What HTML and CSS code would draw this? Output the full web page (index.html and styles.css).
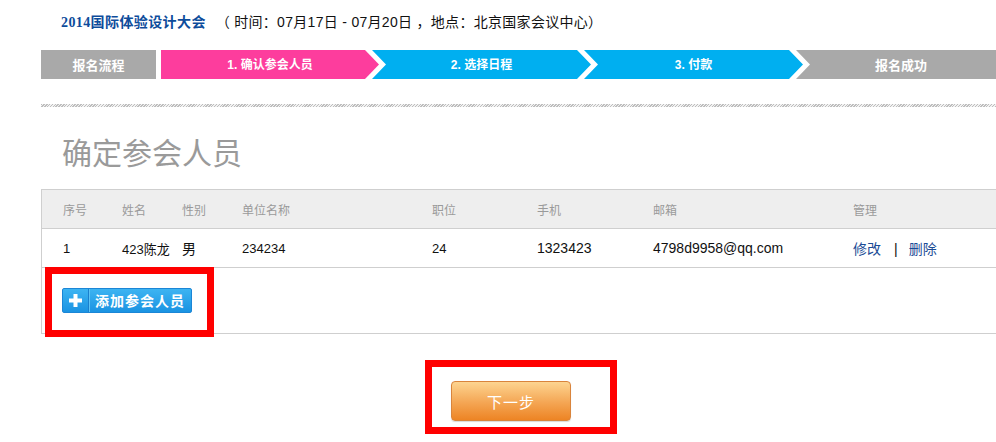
FILE: index.html
```html
<!DOCTYPE html>
<html lang="zh-CN">
<head>
<meta charset="utf-8">
<title>确定参会人员</title>
<link rel="stylesheet" href="styles.css">
</head>
<body>
<div class="page">
  <div class="event-title">
    <span class="event-name">2014国际体验设计大会</span>
    <span class="event-info">（ 时间：07月17日 - 07月20日 ，地点：北京国家会议中心）</span>
  </div>

  <div class="steps">
    <div class="step step-label">报名流程</div>
    <div class="step step-active step-first">1. 确认参会人员</div>
    <div class="step step-todo step-next">2. 选择日程</div>
    <div class="step step-todo step-next">3. 付款</div>
    <div class="step step-done step-next step-last">报名成功</div>
  </div>

  <div class="dash-line"></div>

  <h1 class="section-title">确定参会人员</h1>

  <div class="table">
    <div class="row head">
      <div>序号</div><div>姓名</div><div>性别</div><div>单位名称</div><div>职位</div><div>手机</div><div>邮箱</div><div>管理</div>
    </div>
    <div class="row body">
      <div>1</div><div>423陈龙</div><div class="big">男</div><div>234234</div><div>24</div><div class="big">1323423</div><div class="big">4798d9958@qq.com</div>
      <div class="big manage"><a href="#">修改</a><span class="sep">|</span><a href="#">删除</a></div>
    </div>
    <div class="add-area">
      <button class="add-btn" type="button">
        <span class="add-icon"><svg width="13" height="13" viewBox="0 0 13 13"><path d="M4.5 0h4v4.5H13v4H8.5V13h-4V8.5H0v-4h4.5z" fill="#fff"/></svg></span>
        <span class="add-text">添加参会人员</span>
      </button>
    </div>
  </div>

  <div class="actions">
    <button class="next-btn" type="button">下一步</button>
  </div>
</div>

<div class="mark mark-add"></div>
<div class="mark mark-next"></div>
</body>
</html>
```

FILE: styles.css
```css
html, body {
  margin: 0;
  padding: 0;
  overflow: hidden;
  background: #fff;
}

body {
  font-family: "Liberation Sans", "Noto Sans CJK SC", sans-serif;
  color: #222;
  width: 996px;
  height: 442px;
  position: relative;
}

.page {
  padding-left: 41px;
  width: 960px;
}

.event-title {
  margin-top: 12px;
  height: 20px;
  line-height: 20px;
  padding-left: 20px;
  font-size: 14px;
  white-space: nowrap;
}

.event-name {
  color: #0d4c9b;
  font-weight: bold;
  font-family: "Liberation Serif", "Noto Sans CJK SC", serif;
  font-size: 14px;
  letter-spacing: 0.4px;
}

.event-info {
  color: #111;
  margin-left: 6px;
  font-size: 14px;
  letter-spacing: 0.3px;
}

.steps {
  margin-top: 18px;
  display: flex;
  height: 29px;
  width: 960px;
}

.step {
  height: 29px;
  line-height: 31px;
  color: #fff;
  font-weight: bold;
  font-size: 12px;
  text-align: center;
  flex: none;
  font-family: "Liberation Sans", "Noto Sans CJK SC", sans-serif;
}

.step-label {
  width: 115px;
  background: #a9a9a9;
  margin-right: 5px;
  font-size: 13px;
}

.step-first {
  width: 218px;
  background: #fd3d9d;
  clip-path: polygon(0 0, calc(100% - 14px) 0, 100% 50%, calc(100% - 14px) 100%, 0 100%);
}

.step-next {
  width: 219px;
  margin-left: -7px;
  clip-path: polygon(0 0, calc(100% - 14px) 0, 100% 50%, calc(100% - 14px) 100%, 0 100%, 14px 50%);
}

.step-todo {
  background: #00aff0;
}

.step-done {
  background: #a9a9a9;
  font-size: 13px;
}

.step-last {
  width: 210px;
  clip-path: polygon(0 0, 100% 0, 100% 100%, 0 100%, 14px 50%);
}

.dash-line {
  margin-top: 25px;
  height: 3px;
  width: 960px;
  background: repeating-linear-gradient(135deg, #bdbdbd 0 1px, #f2f2f2 1px 2px);
}

.section-title {
  margin: 29px 0 0 21px;
  height: 30px;
  line-height: 30px;
  font-size: 30px;
  font-weight: normal;
  color: #9a9a9a;
  font-family: "Noto Sans CJK SC", sans-serif;
}

.table {
  margin-top: 23px;
  width: 960px;
  border-top: 1px solid #cfcfcf;
  border-left: 1px solid #cfcfcf;
}

.row {
  display: grid;
  grid-template-columns: 59px 60px 60px 190px 105px 116px 200px 1fr;
  height: 38px;
  align-items: center;
  border-bottom: 1px solid #cfcfcf;
}

.row > div {
  padding-left: 21px;
  white-space: nowrap;
}

.head {
  background: #eeeeee;
  color: #9a9a9a;
  font-size: 12px;
}

.body {
  font-size: 13px;
  color: #111;
}

.body .big {
  font-size: 14px;
}

.manage a {
  color: #1b4c96;
  text-decoration: none;
}

.manage .sep {
  color: #111;
  margin: 0 11px 0 13px;
}

.add-area {
  border-bottom: 1px solid #cfcfcf;
  padding: 20px 0 0 20px;
  box-sizing: border-box;
  height: 66px;
}

.add-btn {
  display: flex;
  align-items: stretch;
  width: 130px;
  height: 25px;
  padding: 0;
  border: 1px solid #1b86d6;
  border-radius: 2px;
  background: linear-gradient(#3db4f2, #1a93e2);
  cursor: pointer;
  box-sizing: border-box;
}

.add-icon {
  width: 25px;
  display: flex;
  align-items: center;
  justify-content: center;
  border-right: 1px solid #1a7fcc;
  box-shadow: 1px 0 0 #5cc3f5;
}

.add-text {
  flex: 1;
  color: #fff;
  font-weight: bold;
  font-size: 14px;
  line-height: 23px;
  letter-spacing: 1px;
  text-align: left;
  padding-left: 6px;
  font-family: "Noto Sans CJK SC", sans-serif;
}

.actions {
  margin-top: 47px;
  width: 940px;
  display: flex;
  justify-content: center;
}

.next-btn {
  width: 120px;
  height: 40px;
  border: 1px solid #d9843c;
  border-radius: 4px;
  background: linear-gradient(#fdd490, #f4a553 55%, #ed8424);
  color: #fff;
  font-size: 15px;
  letter-spacing: 1px;
  font-family: "Noto Sans CJK SC", sans-serif;
  box-shadow: 0 1px 1px rgba(0,0,0,0.15);
  cursor: pointer;
}

.mark {
  position: absolute;
  border: 7px solid #ff0000;
  box-sizing: border-box;
}

.mark-add {
  left: 45px;
  top: 267px;
  width: 169px;
  height: 70px;
}

.mark-next {
  left: 425px;
  top: 360px;
  width: 192px;
  height: 74px;
}
```
